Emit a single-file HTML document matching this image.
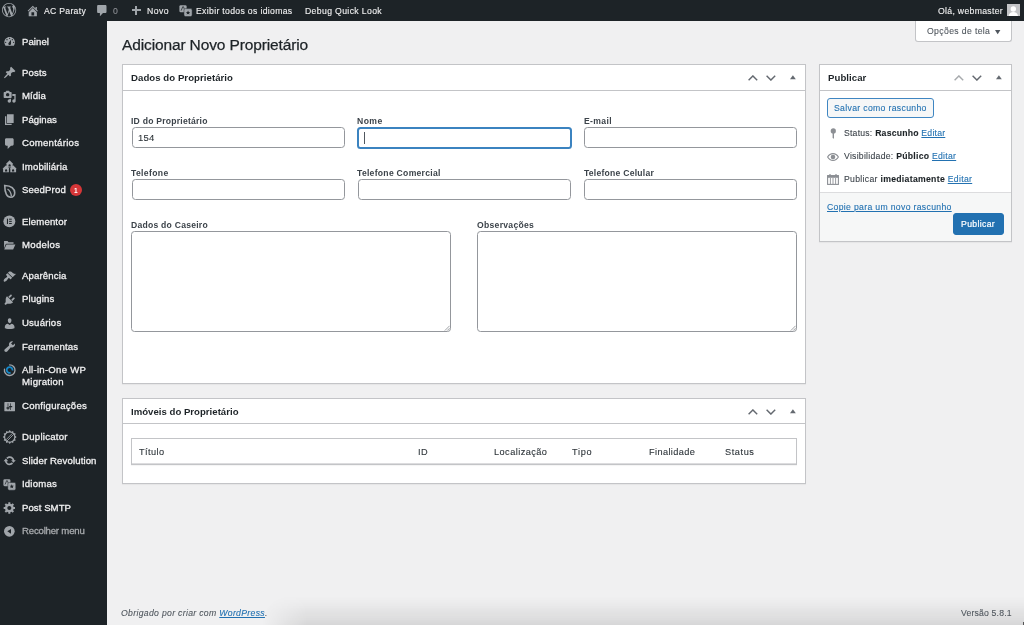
<!DOCTYPE html>
<html><head><meta charset="utf-8"><style>
html,body{margin:0;padding:0;width:1024px;height:625px;overflow:hidden;background:#f0f0f1;font-family:"Liberation Sans",sans-serif}
.a{position:absolute}
.t{position:absolute;white-space:nowrap;will-change:transform;-webkit-text-stroke:0.2px currentColor}
.lk{color:#2271b1}
b{font-weight:700;color:#1d2327}
u{text-decoration:underline;text-underline-offset:1px}
</style></head><body>
<div class="a" style="left:0.00px;top:0.00px;width:1024.00px;height:21.00px;background:#1d2327"></div>
<div class="a" style="left:0.00px;top:21.00px;width:107.00px;height:604.00px;background:#1d2327"></div>
<div class="a" style="left:915.00px;top:21.00px;width:97.00px;height:21.00px;background:#fff;border:1px solid #c3c4c7;border-top:none;border-radius:0 0 3px 3px;box-sizing:border-box"></div>
<svg class="a" style="left:995px;top:29.5px" width="6" height="5" viewBox="0 0 6 5"><path d="M0 0H5.4L2.7 4.2Z" fill="#50575e"/></svg>
<div class="a" style="left:122.00px;top:64.00px;width:684.00px;height:320.00px;background:#fff;border:1px solid #c3c4c7;box-sizing:border-box;box-shadow:0 1px 1px rgba(0,0,0,.04)"></div>
<div class="a" style="left:123.00px;top:90.00px;width:682.00px;height:1.00px;background:#c3c4c7"></div>
<div class="a" style="left:132.00px;top:127.00px;width:213.00px;height:21.00px;background:#fff;border:1px solid #94979c;border-radius:3.5px;box-sizing:border-box"></div>
<div class="a" style="left:357.00px;top:126.50px;width:215.00px;height:22.00px;background:#fff;border:2px solid #3b83c0;border-radius:3.5px;box-sizing:border-box"></div>
<div class="a" style="left:364.20px;top:132.20px;width:1.00px;height:11.60px;background:#50575e"></div>
<div class="a" style="left:584.00px;top:127.00px;width:213.00px;height:21.00px;background:#fff;border:1px solid #94979c;border-radius:3.5px;box-sizing:border-box"></div>
<div class="a" style="left:132.00px;top:179.00px;width:213.00px;height:21.00px;background:#fff;border:1px solid #94979c;border-radius:3.5px;box-sizing:border-box"></div>
<div class="a" style="left:358.00px;top:179.00px;width:213.00px;height:21.00px;background:#fff;border:1px solid #94979c;border-radius:3.5px;box-sizing:border-box"></div>
<div class="a" style="left:584.00px;top:179.00px;width:213.00px;height:21.00px;background:#fff;border:1px solid #94979c;border-radius:3.5px;box-sizing:border-box"></div>
<div class="a" style="left:131.00px;top:231.00px;width:320.00px;height:100.50px;background:#fff;border:1px solid #94979c;border-radius:3.5px;box-sizing:border-box"></div>
<div class="a" style="left:477.00px;top:231.00px;width:320.00px;height:100.50px;background:#fff;border:1px solid #94979c;border-radius:3.5px;box-sizing:border-box"></div>
<svg class="a" style="left:444.30px;top:324.80px" width="6" height="6" viewBox="0 0 6 6"><path d="M0.8 5.6L5.6 0.8M3.2 5.6L5.6 3.2" stroke="#8c8f94" stroke-width="0.8"/></svg>
<svg class="a" style="left:790.10px;top:324.80px" width="6" height="6" viewBox="0 0 6 6"><path d="M0.8 5.6L5.6 0.8M3.2 5.6L5.6 3.2" stroke="#8c8f94" stroke-width="0.8"/></svg>
<div class="a" style="left:122.00px;top:398.00px;width:684.00px;height:86.00px;background:#fff;border:1px solid #c3c4c7;box-sizing:border-box;box-shadow:0 1px 1px rgba(0,0,0,.04)"></div>
<div class="a" style="left:123.00px;top:423.00px;width:682.00px;height:1.00px;background:#c3c4c7"></div>
<div class="a" style="left:131.00px;top:438.00px;width:666.00px;height:27.00px;background:#fff;border:1px solid #c3c4c7;box-sizing:border-box;box-shadow:0 1px 1px rgba(0,0,0,.04)"></div>
<div class="a" style="left:132.00px;top:463.00px;width:664.00px;height:1.00px;background:#dcdcde"></div>
<div class="a" style="left:819.00px;top:64.00px;width:193.00px;height:178.00px;background:#fff;border:1px solid #c3c4c7;box-sizing:border-box;box-shadow:0 1px 1px rgba(0,0,0,.04)"></div>
<div class="a" style="left:820.00px;top:90.00px;width:191.00px;height:1.00px;background:#c3c4c7"></div>
<div class="a" style="left:820.00px;top:192.00px;width:191.00px;height:49.00px;background:#f6f7f7;border-top:1px solid #dcdcde;box-sizing:border-box"></div>
<div class="a" style="left:826.50px;top:97.50px;width:107.50px;height:20.50px;background:#f6f7f7;border:1px solid #3f86c2;border-radius:3px;box-sizing:border-box"></div>
<div class="a" style="left:952.50px;top:212.50px;width:51.50px;height:22.00px;background:#2271b1;border:1px solid #2271b1;border-radius:3px;box-sizing:border-box"></div>
<svg class="a" style="left:748.40px;top:74.80px" width="10" height="6" viewBox="0 0 10 6"><path d="M0.6 5.3L4.9 0.9L9.2 5.3" fill="none" stroke="#646970" stroke-width="1.4"/></svg>
<svg class="a" style="left:766.20px;top:74.80px" width="10" height="6" viewBox="0 0 10 6"><path d="M0.6 0.7L4.9 5.1L9.2 0.7" fill="none" stroke="#646970" stroke-width="1.4"/></svg>
<svg class="a" style="left:789.70px;top:75.20px" width="6" height="5" viewBox="0 0 6 5"><path d="M0 4.3H5.8L2.9 0.2Z" fill="#646970"/></svg>
<svg class="a" style="left:748.40px;top:408.60px" width="10" height="6" viewBox="0 0 10 6"><path d="M0.6 5.3L4.9 0.9L9.2 5.3" fill="none" stroke="#646970" stroke-width="1.4"/></svg>
<svg class="a" style="left:766.20px;top:408.60px" width="10" height="6" viewBox="0 0 10 6"><path d="M0.6 0.7L4.9 5.1L9.2 0.7" fill="none" stroke="#646970" stroke-width="1.4"/></svg>
<svg class="a" style="left:789.70px;top:409.00px" width="6" height="5" viewBox="0 0 6 5"><path d="M0 4.3H5.8L2.9 0.2Z" fill="#646970"/></svg>
<svg class="a" style="left:954.40px;top:74.80px" width="10" height="6" viewBox="0 0 10 6"><path d="M0.6 5.3L4.9 0.9L9.2 5.3" fill="none" stroke="#a7aaad" stroke-width="1.4"/></svg>
<svg class="a" style="left:972.20px;top:74.80px" width="10" height="6" viewBox="0 0 10 6"><path d="M0.6 0.7L4.9 5.1L9.2 0.7" fill="none" stroke="#646970" stroke-width="1.4"/></svg>
<svg class="a" style="left:995.70px;top:75.20px" width="6" height="5" viewBox="0 0 6 5"><path d="M0 4.3H5.8L2.9 0.2Z" fill="#646970"/></svg>
<svg class="a" style="left:1.90px;top:3.00px;overflow:visible" width="14.20" height="14.20" viewBox="0 0 20 20" fill="#a0a5aa"><path d="M20 10c0-5.51-4.49-10-10-10C4.48 0 0 4.49 0 10c0 5.52 4.48 10 10 10 5.51 0 10-4.48 10-10zM7.78 15.37L4.37 6.22c.55-.02 1.17-.08 1.17-.08.5-.06.44-1.13-.06-1.11 0 0-1.45.11-2.37.11-.18 0-.37 0-.58-.01C4.120 2.69 6.87 1.11 10 1.11c2.33 0 4.45.87 6.05 2.34-.68-.11-1.65.39-1.65 1.580 0 .74.45 1.36.9 2.1.35.61.55 1.36.55 2.46 0 1.49-1.4 5-1.4 5l-3.03-8.37c.54-.02.82-.17.82-.17.5-.05.44-1.25-.06-1.22 0 0-1.44.12-2.38.12-.87 0-2.33-.12-2.33-.12-.5-.03-.56 1.2-.06 1.22l.92.08 1.26 3.41zM17.41 10c.24-.64.74-1.870.43-4.25.7 1.29 1.05 2.71 1.05 4.25 0 3.29-1.73 6.24-4.4 7.78.97-2.59 1.940-5.2 2.92-7.78zM6.1 18.09C3.12 16.65 1.11 13.53 1.11 10c0-1.3.23-2.48.72-3.59C3.25 10.3 4.67 14.2 6.1 18.09zm4.03-6.63l2.58 6.98c-.86.29-1.76.45-2.71.45-.79 0-1.57-.11-2.29-.33.81-2.38 1.62-4.74 2.42-7.1z"/></svg>
<svg class="a" style="left:26.20px;top:3.50px;overflow:visible" width="13.60" height="13.60" viewBox="0 0 20 20" fill="#a0a5aa"><path d="M16 8.5l1.53 1.53-1.06 1.06L10 4.62l-6.47 6.47-1.06-1.06L10 2.5l4 4v-2h2v4zm-6-2.46l6 5.99V18H4v-5.97zM12 17v-5H8v5h4z"/></svg>
<svg class="a" style="left:97px;top:5px" width="10" height="12" viewBox="0 0 10 12" fill="#a0a5aa"><path d="M1.4 0.1h6.8c.8 0 1.3.5 1.3 1.3v5.4c0 .8-.5 1.3-1.3 1.3H6L2.9 11.2V8.1H1.4C.6 8.1.1 7.6.1 6.8V1.4C.1.6.6.1 1.4.1z"/></svg>
<div class="a" style="left:131.70px;top:9.40px;width:9.40px;height:2.00px;background:#a0a5aa"></div>
<div class="a" style="left:135.40px;top:5.90px;width:2.00px;height:9.00px;background:#a0a5aa"></div>
<svg class="a" style="left:178.60px;top:4.80px;overflow:visible" width="13.40" height="13.40" viewBox="0 0 20 20" fill="#a0a5aa"><rect x="0.6" y="0.4" width="10.8" height="10.6" rx="2"/><path d="M3.2 8.4L5.6 2.6h1l1.4 3.4" fill="none" stroke="#1d2327" stroke-width="1.1"/><rect x="7.4" y="5.4" width="12.2" height="11.8" rx="2.2" stroke="#1d2327" stroke-width="0.7"/><path d="M13.5 8.2l1 2.1 2.3.2-1.8 1.5.6 2.3-2.1-1.2-2.1 1.2.6-2.3-1.8-1.5 2.3-.2z" fill="#1d2327"/></svg>
<div class="a" style="left:1007.40px;top:3.90px;width:12.60px;height:12.60px;background:#c3c4c7"></div>
<svg class="a" style="left:1007.4px;top:3.9px" width="12.6" height="12.6" viewBox="0 0 12.6 12.6" fill="#fff"><circle cx="6.3" cy="5.0" r="2.7"/><path d="M1.6 12.6c0-2.9 2.1-4.5 4.7-4.5s4.7 1.6 4.7 4.5z"/></svg>
<svg color="#a0a5aa" class="a" style="left:2.80px;top:35.30px;overflow:visible" width="13.33" height="13.33" viewBox="0 0 20 20" fill="#a0a5aa"><path fill-rule="evenodd" d="M3.76 16h12.48c1.1-1.37 1.76-3.11 1.76-5 0-4.42-3.58-8-8-8s-8 3.58-8 8c0 1.89.66 3.63 1.76 5zM10 4c.55 0 1 .45 1 1s-.45 1-1 1-1-.45-1-1 .45-1 1-1zM6 6c.55 0 1 .45 1 1s-.45 1-1 1-1-.45-1-1 .45-1 1-1zm8 0c.55 0 1 .45 1 1s-.45 1-1 1-1-.45-1-1 .45-1 1-1zm-5.37 5.55L12 7v6c0 1.1-.9 2-2 2s-2-.9-2-2c0-.57.24-1.08.63-1.45zM4 10c.55 0 1 .45 1 1s-.45 1-1 1-1-.45-1-1 .45-1 1-1zm12 0c.55 0 1 .45 1 1s-.45 1-1 1-1-.45-1-1 .45-1 1-1z"/></svg>
<svg color="#a0a5aa" class="a" style="left:2.80px;top:66.30px;overflow:visible" width="13.33" height="13.33" viewBox="0 0 20 20" fill="#a0a5aa"><path d="M10.44 3.02l1.82-1.82 6.36 6.35-1.83 1.82c-1.05-.68-2.48-.57-3.41.36l-.75.75c-.92.93-1.04 2.35-.35 3.41l-1.83 1.820-2.41-2.41-2.8 2.79c-.42.42-3.38 2.71-3.8 2.29s1.86-3.39 2.28-3.81l2.79-2.79L4.1 9.36l1.83-1.82c1.05.69 2.48.57 3.4-.36l.75-.75c.93-.92 1.05-2.35.36-3.41z"/></svg>
<svg color="#a0a5aa" class="a" style="left:2.80px;top:89.50px;overflow:visible" width="13.33" height="13.33" viewBox="0 0 20 20" fill="#a0a5aa"><path fill-rule="evenodd" d="M13 11V4c0-.55-.45-1-1-1h-1.67L9 1H5L3.67 3H2c-.55 0-1 .45-1 1v7c0 .55.45 1 1 1h10c.55 0 1-.45 1-1zM7 4.5c1.38 0 2.5 1.12 2.5 2.5S8.38 9.5 7 9.5 4.5 8.38 4.5 7 5.62 4.5 7 4.5zM14 6h5v10.5c0 1.38-1.12 2.5-2.5 2.5S14 17.88 14 16.5s1.120-2.5 2.5-2.5c.17 0 .34.02.5.05V9h-3V6zm-4 8.05V13h2v3.5c0 1.38-1.12 2.5-2.5 2.5S7 17.88 7 16.5 8.12 14 9.5 14c.17 0 .34.02.5.05z"/></svg>
<svg color="#a0a5aa" class="a" style="left:2.80px;top:113.40px;overflow:visible" width="13.33" height="13.33" viewBox="0 0 20 20" fill="#a0a5aa"><path d="M6 15V2h10v13H6zm-1 1h8v2H3V5h2v11z"/></svg>
<svg color="#a0a5aa" class="a" style="left:2.80px;top:136.90px;overflow:visible" width="13.33" height="13.33" viewBox="0 0 20 20" fill="#a0a5aa"><path d="M5 2h9c1.1 0 2 .9 2 2v7c0 1.1-.9 2-2 2h-2l-5 5v-5H5c-1.1 0-2-.9-2-2V4c0-1.1.9-2 2-2z"/></svg>
<svg class="a" color="#a0a5aa" style="left:0px;top:156.00px;overflow:visible" width="20" height="20" viewBox="0 0 20 20" fill="#a0a5aa"><path d="M9.60 4.30L13.30 8.00L12.70 8.00L12.70 11.60L6.50 11.60L6.50 8.00L5.90 8.00Z"/><path d="M8.50 10.40v-1a1.1 1.1 0 0 1 2.2 0v1z" fill="#1d2327"/><path d="M6.10 9.30L9.50 12.80L8.90 12.80L8.90 16.20L3.10 16.20L3.10 12.80L2.50 12.80Z"/><path d="M5.00 15.40v-1a1.1 1.1 0 0 1 2.2 0v1z" fill="#1d2327"/><path d="M13.10 9.30L16.70 12.80L16.10 12.80L16.10 16.20L10.30 16.20L10.30 12.80L9.70 12.80Z"/><path d="M12.00 15.40v-1a1.1 1.1 0 0 1 2.2 0v1z" fill="#1d2327"/><rect x="9.4" y="11.60" width="0.6" height="4.5" fill="#1d2327"/></svg>
<svg color="#a0a5aa" class="a" style="left:2.80px;top:183.80px;overflow:visible" width="13.33" height="13.33" viewBox="0 0 20 20" fill="#a0a5aa"><path d="M2.6 2.2C9.5 2.6 17.4 5.4 17.6 13.2c.1 3.8-2.3 6.6-6 6.6C6.2 19.8 2.6 14.2 2.6 2.2z" fill="none" stroke="currentColor" stroke-width="2.4"/><path d="M6.8 7.6c3.2 2.2 5.4 5.4 5.8 11" fill="none" stroke="currentColor" stroke-width="2"/></svg>
<svg color="#a0a5aa" class="a" style="left:3.20px;top:214.60px;overflow:visible" width="12.70" height="12.70" viewBox="0 0 20 20" fill="#a0a5aa"><circle cx="10" cy="10" r="9.4"/><rect x="6.2" y="5.8" width="1.7" height="8.4" fill="#1d2327"/><rect x="9.6" y="5.8" width="4.2" height="1.6" fill="#1d2327"/><rect x="9.6" y="9.2" width="4.2" height="1.6" fill="#1d2327"/><rect x="9.6" y="12.6" width="4.2" height="1.6" fill="#1d2327"/></svg>
<svg color="#a0a5aa" class="a" style="left:2.80px;top:238.50px;overflow:visible" width="13.33" height="13.33" viewBox="0 0 20 20" fill="#a0a5aa"><path d="M1.6 3h5.2l1.6 1.8h7.4v2.4H5.2c-.6 0-1 .3-1.2.8L1.6 14.2zM5.2 8.2h13.4l-3.4 7.6H1.8z"/></svg>
<svg color="#a0a5aa" class="a" style="left:2.80px;top:270.00px;overflow:visible" width="13.33" height="13.33" viewBox="0 0 20 20" fill="#a0a5aa"><path d="M14.48 11.06L7.41 3.99l1.5-1.5c.5-.56 2.3-.47 3.51.32 1.21.8 1.43 1.28 2.91 2.1 1.18.64 2.45 1.26 4.45.85zm-.71.71L6.7 4.7 4.93 6.47c-.39.39-.39 1.02 0 1.41l1.06 1.06c.39.39.39 1.03 0 1.42-.6.6-1.43 1.11-2.21 1.690-.35.26-.7.53-1.01.84C1.43 14.23.4 16.08 1.4 17.07c.99 1 2.84-.03 4.18-1.36.31-.31.58-.66.85-1.02.57-.78 1.08-1.61 1.69-2.21.39-.39 1.02-.39 1.41 0l1.06 1.06c.39.39 1.02.39 1.41 0z"/></svg>
<svg color="#a0a5aa" class="a" style="left:2.80px;top:293.10px;overflow:visible" width="13.33" height="13.33" viewBox="0 0 20 20" fill="#a0a5aa"><path d="M13.11 4.36L9.87 7.6 8 5.73l3.24-3.24c.35-.34 1.05-.2 1.56.32.52.51.66 1.21.31 1.55zm-8 1.77l.91-1.12 9.01 9.01-1.19.84c-.71.71-2.63 1.16-3.82 1.16H6.14L4.9 17.26c-.59.59-1.54.59-2.12 0-.59-.58-.59-1.53 0-2.12l1.24-1.24v-3.88c0-1.13.4-3.19 1.09-3.89zm7.26 3.97l3.24-3.24c.34-.35 1.04-.21 1.55.31.52.51.66 1.21.31 1.55l-3.24 3.25z"/></svg>
<svg color="#a0a5aa" class="a" style="left:2.80px;top:316.80px;overflow:visible" width="13.33" height="13.33" viewBox="0 0 20 20" fill="#a0a5aa"><path d="M10 9.25c-2.27 0-2.73-3.44-2.73-3.44C7 4.02 7.82 2 9.97 2c2.16 0 2.98 2.02 2.71 3.81 0 0-.41 3.44-2.68 3.44zm0 2.57L12.72 10c2.39 0 4.52 2.33 4.52 4.53v2.49s-3.65 1.13-7.24 1.13c-3.65 0-7.24-1.13-7.24-1.13v-2.49c0-2.25 1.94-4.48 4.47-4.48z"/></svg>
<svg color="#a0a5aa" class="a" style="left:2.80px;top:340.30px;overflow:visible" width="13.33" height="13.33" viewBox="0 0 20 20" fill="#a0a5aa"><path d="M16.68 9.77c-1.34 1.34-3.3 1.67-4.95.99l-5.41 6.52c-.99.99-2.59.99-3.58 0s-.99-2.59 0-3.57l6.52-5.42c-.68-1.65-.35-3.61.99-4.95 1.28-1.28 3.12-1.62 4.72-1.06l-2.89 2.89 2.82 2.82 2.86-2.87c.53 1.58.18 3.39-1.08 4.65z"/></svg>
<svg class="a" color="#a0a5aa" style="left:0px;top:360.00px;overflow:visible" width="20" height="20" viewBox="0 0 20 20" fill="#a0a5aa"><path d="M9.7 4.9A5.3 5.3 0 1 1 4.48 9.28" fill="none" stroke="currentColor" stroke-width="1.35" stroke-linecap="round"/><path d="M12.46 10.5A2.9 2.9 0 1 0 10.6 12.72" fill="none" stroke="#1689c9" stroke-width="1.8"/></svg>
<svg color="#a0a5aa" class="a" style="left:2.80px;top:399.90px;overflow:visible" width="13.33" height="13.33" viewBox="0 0 20 20" fill="#a0a5aa"><path fill-rule="evenodd" d="M18 16V4c0-.55-.45-1-1-1H3c-.55 0-1 .45-1 1v12c0 .55.45 1 1 1h14c.55 0 1-.45 1-1zM8 11h1c.55 0 1 .45 1 1s-.45 1-1 1H8v1.5c0 .28-.22.5-.5.5s-.5-.22-.5-.5V13H6c-.55 0-1-.45-1-1s.45-1 1-1h1V5.5c0-.28.22-.5.5-.5s.5.22.5.5V11zm5-2h-1V5.5c0-.28-.22-.5-.5-.5s-.5.22-.5.5V9h-1c-.55 0-1 .45-1 1s.45 1 1 1h1v3.5c0 .28.22.5.5.5s.5-.22.5-.5V11h1c.55 0 1-.45 1-1s-.45-1-1-1z"/></svg>
<svg class="a" color="#a0a5aa" style="left:0px;top:427.30px;overflow:visible" width="20" height="20" viewBox="0 0 20 20" fill="#a0a5aa"><path fill-rule="evenodd" d="M16.60 10.00 L15.01 11.42 L15.68 13.45 L13.59 13.89 L13.15 15.98 L11.12 15.31 L9.70 16.90 L8.28 15.31 L6.25 15.98 L5.81 13.89 L3.72 13.45 L4.39 11.42 L2.80 10.00 L4.39 8.58 L3.72 6.55 L5.81 6.11 L6.25 4.02 L8.28 4.69 L9.70 3.10 L11.12 4.69 L13.15 4.02 L13.59 6.11 L15.68 6.55 L15.01 8.58Z M9.70 5.50 a4.5 4.5 0 1 0 0.001 0Z"/><path d="M5.9 12.9L12.6 6.2M7.0 14.0L13.7 7.3" stroke="currentColor" stroke-width="0.85"/></svg>
<svg color="#a0a5aa" class="a" style="left:2.80px;top:454.30px;overflow:visible" width="13.33" height="13.33" viewBox="0 0 20 20" fill="#a0a5aa"><path d="M10.2 3.28c3.53 0 6.43 2.61 6.92 6h2.08l-3.5 4-3.5-4h2.32c-.45-1.97-2.21-3.45-4.32-3.45-1.45 0-2.73.71-3.54 1.78L4.95 5.66C6.23 4.2 8.11 3.28 10.2 3.28zm-.4 13.44c-3.52 0-6.43-2.61-6.92-6H.8l3.5-4c1.17 1.33 2.33 2.67 3.5 4H5.48c.45 1.97 2.21 3.45 4.32 3.45 1.45 0 2.73-.71 3.54-1.78l1.71 1.95c-1.28 1.46-3.15 2.38-5.25 2.38z"/></svg>
<svg color="#a0a5aa" class="a" style="left:2.80px;top:479.20px;overflow:visible" width="13.00" height="13.00" viewBox="0 0 20 20" fill="#a0a5aa"><rect x="0.6" y="0.4" width="10.8" height="10.6" rx="2"/><path d="M3.2 8.4L5.6 2.6h1l1.4 3.4" fill="none" stroke="#1d2327" stroke-width="1.1"/><rect x="7.4" y="5.4" width="12.2" height="11.8" rx="2.2" stroke="#1d2327" stroke-width="0.7"/><path d="M13.5 8.2l1 2.1 2.3.2-1.8 1.5.6 2.3-2.1-1.2-2.1 1.2.6-2.3-1.8-1.5 2.3-.2z" fill="#1d2327"/></svg>
<svg color="#a0a5aa" class="a" style="left:2.80px;top:501.40px;overflow:visible" width="13.33" height="13.33" viewBox="0 0 20 20" fill="#a0a5aa"><path fill-rule="evenodd" d="M18 12h-2.18c-.17.7-.44 1.35-.81 1.93l1.54 1.54-2.1 2.1-1.54-1.54c-.58.36-1.23.63-1.91.79V19H8v-2.18c-.68-.16-1.33-.43-1.91-.79l-1.54 1.54-2.12-2.12 1.54-1.54c-.36-.58-.63-1.23-.79-1.91H1V9.03h2.17c.16-.7.44-1.35.8-1.94L2.43 5.55l2.1-2.1 1.54 1.54c.58-.37 1.24-.64 1.93-.81V2h3v2.18c.68.16 1.330.43 1.91.78l1.54-1.54 2.12 2.12-1.54 1.54c.36.59.64 1.24.8 1.94H18V12zm-8.5 1.5c1.66 0 3-1.34 3-3s-1.34-3-3-3-3 1.34-3 3 1.34 3 3 3z"/></svg>
<svg color="#a0a5aa" class="a" style="left:3.20px;top:525.20px;overflow:visible" width="12.70" height="12.70" viewBox="0 0 20 20" fill="#a0a5aa"><circle cx="10" cy="10" r="8.4"/><path d="M12.6 6.2v7.6L6.8 10z" fill="#1d2327"/></svg>
<div class="a" style="left:70.2px;top:184.3px;width:12.2px;height:12.2px;border-radius:50%;background:#d63638"></div>
<svg class="a" style="left:829.6px;top:127.8px" width="7" height="11" viewBox="0 0 7 11" fill="#8c8f94"><circle cx="3.3" cy="2.9" r="2.6"/><path d="M2.6 4.5h1.4v6.2l-1.4-.6z"/></svg>
<svg class="a" style="left:827px;top:153.4px" width="12" height="8" viewBox="0 0 12 8"><path d="M0.6 4C2 1.6 4 0.6 6 0.6S10 1.6 11.4 4C10 6.4 8 7.4 6 7.4S2 6.4 0.6 4z" fill="none" stroke="#8c8f94" stroke-width="1.1"/><circle cx="6" cy="4" r="2.3" fill="#8c8f94"/></svg>
<svg class="a" style="left:827px;top:174.2px" width="12" height="11" viewBox="0 0 12 11"><rect x="0.6" y="1.6" width="10.8" height="8.8" fill="none" stroke="#8c8f94" stroke-width="1.1"/><rect x="0.6" y="1.6" width="10.8" height="2.2" fill="#8c8f94"/><path d="M3.4 4v6M6 4v6M8.6 4v6" stroke="#8c8f94" stroke-width="0.9"/><path d="M3 0v2.4M9 0v2.4" stroke="#8c8f94" stroke-width="1.2"/></svg>
<div class="a" style="left:262px;top:596px;width:780px;height:29px;background:linear-gradient(to bottom, rgba(0,0,0,0) 0px, rgba(0,0,0,0.02) 8px, rgba(0,0,0,0.10) 29px);-webkit-mask-image:linear-gradient(to right, transparent 0px, black 45px);border-top-left-radius:30px"></div>
<div class="a" style="left:1023.00px;top:622.00px;width:1.00px;height:3.00px;background:#555"></div>
<div id="ab1" class="t" style="left:43.50px;top:4.63px;font-size:8.67px;line-height:12.14px;font-weight:400;color:#f0f0f1;letter-spacing:0.283px;-webkit-text-stroke:0.12px currentColor;">AC Paraty</div>
<div id="ab2" class="t" style="left:112.90px;top:4.63px;font-size:8.67px;line-height:12.14px;font-weight:400;color:#8c8f94;letter-spacing:0.000px;-webkit-text-stroke:0.12px currentColor;">0</div>
<div id="ab3" class="t" style="left:146.60px;top:4.63px;font-size:8.67px;line-height:12.14px;font-weight:400;color:#f0f0f1;letter-spacing:0.445px;-webkit-text-stroke:0.12px currentColor;">Novo</div>
<div id="ab4" class="t" style="left:196.20px;top:4.63px;font-size:8.67px;line-height:12.14px;font-weight:400;color:#f0f0f1;letter-spacing:0.325px;-webkit-text-stroke:0.12px currentColor;">Exibir todos os idiomas</div>
<div id="ab5" class="t" style="left:304.80px;top:4.63px;font-size:8.67px;line-height:12.14px;font-weight:400;color:#f0f0f1;letter-spacing:0.361px;-webkit-text-stroke:0.12px currentColor;">Debug Quick Look</div>
<div id="ab6" class="t" style="left:938.10px;top:4.63px;font-size:8.67px;line-height:12.14px;font-weight:400;color:#f0f0f1;letter-spacing:0.313px;-webkit-text-stroke:0.12px currentColor;">Olá, webmaster</div>
<div id="m0" class="t" style="left:21.90px;top:34.65px;font-size:9.60px;line-height:13.44px;font-weight:400;color:#f0f0f1;letter-spacing:0.055px;-webkit-text-stroke:0.3px currentColor;">Painel</div>
<div id="m1" class="t" style="left:21.90px;top:65.65px;font-size:9.60px;line-height:13.44px;font-weight:400;color:#f0f0f1;letter-spacing:0.138px;-webkit-text-stroke:0.3px currentColor;">Posts</div>
<div id="m2" class="t" style="left:21.90px;top:88.85px;font-size:9.60px;line-height:13.44px;font-weight:400;color:#f0f0f1;letter-spacing:0.106px;-webkit-text-stroke:0.3px currentColor;">Mídia</div>
<div id="m3" class="t" style="left:21.90px;top:112.75px;font-size:9.60px;line-height:13.44px;font-weight:400;color:#f0f0f1;letter-spacing:0.032px;-webkit-text-stroke:0.3px currentColor;">Páginas</div>
<div id="m4" class="t" style="left:21.90px;top:136.25px;font-size:9.60px;line-height:13.44px;font-weight:400;color:#f0f0f1;letter-spacing:0.255px;-webkit-text-stroke:0.3px currentColor;">Comentários</div>
<div id="m5" class="t" style="left:21.90px;top:159.75px;font-size:9.60px;line-height:13.44px;font-weight:400;color:#f0f0f1;letter-spacing:0.161px;-webkit-text-stroke:0.3px currentColor;">Imobiliária</div>
<div id="m6" class="t" style="left:21.90px;top:183.15px;font-size:9.60px;line-height:13.44px;font-weight:400;color:#f0f0f1;letter-spacing:0.152px;-webkit-text-stroke:0.3px currentColor;">SeedProd</div>
<div id="m7" class="t" style="left:21.90px;top:214.65px;font-size:9.60px;line-height:13.44px;font-weight:400;color:#f0f0f1;letter-spacing:0.140px;-webkit-text-stroke:0.3px currentColor;">Elementor</div>
<div id="m8" class="t" style="left:21.90px;top:237.85px;font-size:9.60px;line-height:13.44px;font-weight:400;color:#f0f0f1;letter-spacing:0.289px;-webkit-text-stroke:0.3px currentColor;">Modelos</div>
<div id="m9" class="t" style="left:21.90px;top:269.35px;font-size:9.60px;line-height:13.44px;font-weight:400;color:#f0f0f1;letter-spacing:0.144px;-webkit-text-stroke:0.3px currentColor;">Aparência</div>
<div id="m10" class="t" style="left:21.90px;top:292.45px;font-size:9.60px;line-height:13.44px;font-weight:400;color:#f0f0f1;letter-spacing:0.146px;-webkit-text-stroke:0.3px currentColor;">Plugins</div>
<div id="m11" class="t" style="left:21.90px;top:316.15px;font-size:9.60px;line-height:13.44px;font-weight:400;color:#f0f0f1;letter-spacing:0.192px;-webkit-text-stroke:0.3px currentColor;">Usuários</div>
<div id="m12" class="t" style="left:21.90px;top:339.65px;font-size:9.60px;line-height:13.44px;font-weight:400;color:#f0f0f1;letter-spacing:0.165px;-webkit-text-stroke:0.3px currentColor;">Ferramentas</div>
<div id="m13" class="t" style="left:21.90px;top:363.15px;font-size:9.60px;line-height:13.44px;font-weight:400;color:#f0f0f1;letter-spacing:0.263px;-webkit-text-stroke:0.3px currentColor;">All-in-One WP</div>
<div id="m14" class="t" style="left:21.90px;top:375.25px;font-size:9.60px;line-height:13.44px;font-weight:400;color:#f0f0f1;letter-spacing:0.259px;-webkit-text-stroke:0.3px currentColor;">Migration</div>
<div id="m15" class="t" style="left:21.90px;top:399.25px;font-size:9.60px;line-height:13.44px;font-weight:400;color:#f0f0f1;letter-spacing:0.241px;-webkit-text-stroke:0.3px currentColor;">Configurações</div>
<div id="m16" class="t" style="left:21.90px;top:430.45px;font-size:9.60px;line-height:13.44px;font-weight:400;color:#f0f0f1;letter-spacing:0.260px;-webkit-text-stroke:0.3px currentColor;">Duplicator</div>
<div id="m17" class="t" style="left:21.90px;top:453.65px;font-size:9.60px;line-height:13.44px;font-weight:400;color:#f0f0f1;letter-spacing:0.121px;-webkit-text-stroke:0.3px currentColor;">Slider Revolution</div>
<div id="m18" class="t" style="left:21.90px;top:477.35px;font-size:9.60px;line-height:13.44px;font-weight:400;color:#f0f0f1;letter-spacing:0.186px;-webkit-text-stroke:0.3px currentColor;">Idiomas</div>
<div id="m19" class="t" style="left:21.90px;top:500.75px;font-size:9.60px;line-height:13.44px;font-weight:400;color:#f0f0f1;letter-spacing:0.054px;-webkit-text-stroke:0.3px currentColor;">Post SMTP</div>
<div id="m20" class="t" style="left:21.90px;top:524.25px;font-size:9.60px;line-height:13.44px;font-weight:400;color:#a7aaad;letter-spacing:-0.190px;-webkit-text-stroke:0.3px currentColor;">Recolher menu</div>
<div id="h1" class="t" style="left:122.40px;top:34.08px;font-size:15.50px;line-height:21.70px;font-weight:400;color:#1d2327;letter-spacing:-0.131px;-webkit-text-stroke:0.25px currentColor;">Adicionar Novo Proprietário</div>
<div id="so" class="t" style="left:926.50px;top:25.13px;font-size:8.67px;line-height:12.14px;font-weight:400;color:#50575e;letter-spacing:0.362px;-webkit-text-stroke:0.1px currentColor;">Opções de tela</div>
<div id="pb1" class="t" style="left:131.00px;top:71.25px;font-size:9.60px;line-height:13.44px;font-weight:700;color:#1d2327;letter-spacing:0.059px;-webkit-text-stroke:0;">Dados do Proprietário</div>
<div id="l1" class="t" style="left:131.20px;top:114.60px;font-size:8.60px;line-height:12.04px;font-weight:700;color:#3c434a;letter-spacing:0.229px;-webkit-text-stroke:0;">ID do Proprietário</div>
<div id="l2" class="t" style="left:357.30px;top:114.60px;font-size:8.60px;line-height:12.04px;font-weight:700;color:#3c434a;letter-spacing:0.431px;-webkit-text-stroke:0;">Nome</div>
<div id="l3" class="t" style="left:583.80px;top:114.60px;font-size:8.60px;line-height:12.04px;font-weight:700;color:#3c434a;letter-spacing:0.367px;-webkit-text-stroke:0;">E-mail</div>
<div id="l4" class="t" style="left:131.20px;top:166.60px;font-size:8.60px;line-height:12.04px;font-weight:700;color:#3c434a;letter-spacing:0.362px;-webkit-text-stroke:0;">Telefone</div>
<div id="l5" class="t" style="left:357.30px;top:166.60px;font-size:8.60px;line-height:12.04px;font-weight:700;color:#3c434a;letter-spacing:0.281px;-webkit-text-stroke:0;">Telefone Comercial</div>
<div id="l6" class="t" style="left:583.80px;top:166.60px;font-size:8.60px;line-height:12.04px;font-weight:700;color:#3c434a;letter-spacing:0.236px;-webkit-text-stroke:0;">Telefone Celular</div>
<div id="l7" class="t" style="left:131.20px;top:218.60px;font-size:8.60px;line-height:12.04px;font-weight:700;color:#3c434a;letter-spacing:0.240px;-webkit-text-stroke:0;">Dados do Caseiro</div>
<div id="l8" class="t" style="left:477.10px;top:218.60px;font-size:8.60px;line-height:12.04px;font-weight:700;color:#3c434a;letter-spacing:0.292px;-webkit-text-stroke:0;">Observações</div>
<div id="v154" class="t" style="left:138.10px;top:131.06px;font-size:9.50px;line-height:13.30px;font-weight:400;color:#2c3338;letter-spacing:0.182px;-webkit-text-stroke:0.1px currentColor;">154</div>
<div id="pb2" class="t" style="left:131.00px;top:404.95px;font-size:9.60px;line-height:13.44px;font-weight:700;color:#1d2327;letter-spacing:0.015px;-webkit-text-stroke:0;">Imóveis do Proprietário</div>
<div id="th1" class="t" style="left:138.50px;top:445.57px;font-size:9.20px;line-height:12.88px;font-weight:400;color:#2c3338;letter-spacing:0.435px;-webkit-text-stroke:0.1px currentColor;">Título</div>
<div id="th2" class="t" style="left:418.30px;top:445.57px;font-size:9.20px;line-height:12.88px;font-weight:400;color:#2c3338;letter-spacing:0.450px;-webkit-text-stroke:0.1px currentColor;">ID</div>
<div id="th3" class="t" style="left:494.40px;top:445.57px;font-size:9.20px;line-height:12.88px;font-weight:400;color:#2c3338;letter-spacing:0.443px;-webkit-text-stroke:0.1px currentColor;">Localização</div>
<div id="th4" class="t" style="left:571.70px;top:445.57px;font-size:9.20px;line-height:12.88px;font-weight:400;color:#2c3338;letter-spacing:0.665px;-webkit-text-stroke:0.1px currentColor;">Tipo</div>
<div id="th5" class="t" style="left:648.50px;top:445.57px;font-size:9.20px;line-height:12.88px;font-weight:400;color:#2c3338;letter-spacing:0.389px;-webkit-text-stroke:0.1px currentColor;">Finalidade</div>
<div id="th6" class="t" style="left:725.00px;top:445.57px;font-size:9.20px;line-height:12.88px;font-weight:400;color:#2c3338;letter-spacing:0.576px;-webkit-text-stroke:0.1px currentColor;">Status</div>
<div id="pub" class="t" style="left:827.70px;top:71.25px;font-size:9.60px;line-height:13.44px;font-weight:700;color:#1d2327;letter-spacing:0.066px;-webkit-text-stroke:0;">Publicar</div>
<div id="save" class="t" style="left:834.20px;top:102.43px;font-size:8.67px;line-height:12.14px;font-weight:400;color:#2271b1;letter-spacing:0.329px;-webkit-text-stroke:0.1px currentColor;">Salvar como rascunho</div>
<div id="st" class="t" style="left:844.00px;top:126.93px;font-size:8.67px;line-height:12.14px;font-weight:400;color:#3c434a;letter-spacing:0.220px;-webkit-text-stroke:0.1px currentColor;">Status: <b>Rascunho</b> <u class="lk">Editar</u></div>
<div id="vis" class="t" style="left:844.00px;top:150.13px;font-size:8.67px;line-height:12.14px;font-weight:400;color:#3c434a;letter-spacing:0.266px;-webkit-text-stroke:0.1px currentColor;">Visibilidade: <b>Público</b> <u class="lk">Editar</u></div>
<div id="imd" class="t" style="left:844.00px;top:173.33px;font-size:8.67px;line-height:12.14px;font-weight:400;color:#3c434a;letter-spacing:0.305px;-webkit-text-stroke:0.1px currentColor;">Publicar <b>imediatamente</b> <u class="lk">Editar</u></div>
<div id="copy" class="t" style="left:826.50px;top:200.53px;font-size:8.67px;line-height:12.14px;font-weight:400;color:#2271b1;letter-spacing:0.323px;-webkit-text-stroke:0.1px currentColor;"><u>Copie para um novo rascunho</u></div>
<div id="pbtn" class="t" style="left:961.20px;top:217.53px;font-size:8.67px;line-height:12.14px;font-weight:400;color:#ffffff;letter-spacing:0.352px;">Publicar</div>
<div id="ft1" class="t" style="left:120.80px;top:607.23px;font-size:8.67px;line-height:12.14px;font-weight:400;color:#50575e;letter-spacing:0.319px;-webkit-text-stroke:0.1px currentColor;"><i>Obrigado por criar com <u class="lk">WordPress</u>.</i></div>
<div id="ft2" class="t" style="left:961.20px;top:607.13px;font-size:8.67px;line-height:12.14px;font-weight:400;color:#50575e;letter-spacing:0.174px;-webkit-text-stroke:0.1px currentColor;">Versão 5.8.1</div>
<div id="badge" class="t" style="left:74.10px;top:186.49px;font-size:6.60px;line-height:9.24px;font-weight:700;color:#ffffff;letter-spacing:0.000px;-webkit-text-stroke:0;">1</div>
</body></html>
